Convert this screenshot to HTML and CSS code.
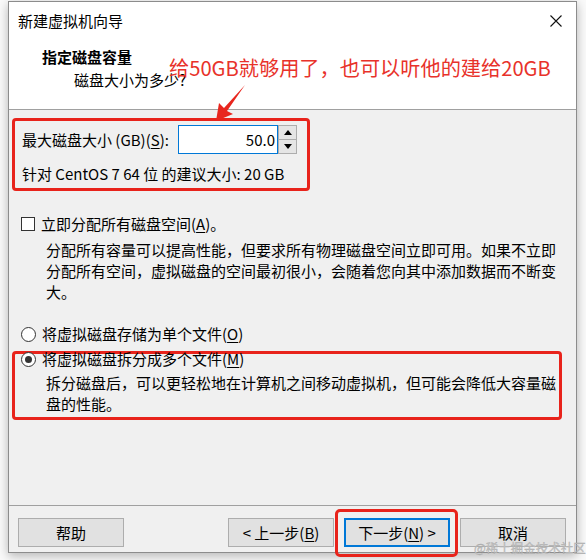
FILE: index.html
```html
<!DOCTYPE html>
<html lang="zh-CN">
<head>
    <meta charset="UTF-8">
    <meta name="viewport" content="width=device-width, initial-scale=1.0">
    <title>新建虚拟机向导</title>
    <link rel="stylesheet" href="styles.css">
</head>
<body>

    <div class="window">
        <!-- 标题栏 -->
        <div class="titlebar">
            <span class="title">新建虚拟机向导</span>
            <svg class="close" width="12" height="12" viewBox="0 0 12 12">
                <path d="M0.5 0.5 L11.5 11.5 M11.5 0.5 L0.5 11.5" stroke="#111" stroke-width="1.1" fill="none"/>
            </svg>
        </div>

        <!-- 页头 -->
        <div class="header">
            <h1>指定磁盘容量</h1>
            <p class="sub">磁盘大小为多少?</p>
            <p class="note">给50GB就够用了，也可以听他的建给20GB</p>
            <svg class="arrow" width="34" height="40" viewBox="0 0 34 40">
                <path d="M2 38 L5 20 L10 25 L31 2 L13 28 L19 31 Z" fill="#e8261e"/>
            </svg>
        </div>

        <div class="content">
            <!-- 磁盘大小 -->
            <div class="mark size-box">
                <div class="size-row">
                    <label class="size-label">最大磁盘大小 (GB)(<u>S</u>):</label>
                    <div class="spin">
                        <div class="spin-input">50.0</div>
                        <div class="spin-btns">
                            <span class="spin-btn"><i class="tri up"></i></span>
                            <span class="spin-btn"><i class="tri down"></i></span>
                        </div>
                    </div>
                </div>
                <p class="hint">针对 CentOS 7 64 位 的建议大小: 20 GB</p>
            </div>

            <!-- 立即分配 -->
            <div class="option check-row">
                <span class="checkbox"></span>
                <span>立即分配所有磁盘空间(<u>A</u>)。</span>
            </div>
            <p class="desc">分配所有容量可以提高性能，但要求所有物理磁盘空间立即可用。如果不立即分配所有空间，虚拟磁盘的空间最初很小，会随着您向其中添加数据而不断变大。</p>

            <!-- 单个文件 -->
            <div class="option radio-row">
                <span class="radio"></span>
                <span>将虚拟磁盘存储为单个文件(<u>O</u>)</span>
            </div>

            <!-- 多个文件 -->
            <div class="mark split-box">
                <div class="option split-row">
                    <span class="radio on"></span>
                    <span>将虚拟磁盘拆分成多个文件(<u>M</u>)</span>
                </div>
                <p class="desc split-desc">拆分磁盘后，可以更轻松地在计算机之间移动虚拟机，但可能会降低大容量磁盘的性能。</p>
            </div>
        </div>

        <!-- 底部按钮 -->
        <div class="footer">
            <button class="btn">帮助</button>
            <div class="nav">
                <button class="btn">&lt; 上一步(<u>B</u>)</button>
                <div class="next-wrap">
                    <button class="btn default">下一步(<u>N</u>) &gt;</button>
                    <span class="next-mark"></span>
                </div>
                <button class="btn">取消</button>
            </div>
        </div>
    </div>

    <span class="watermark">@稀土掘金技术社区</span>

</body>
</html>
```

FILE: styles.css
```css
/* 向导窗口 */
body {
    margin: 0;
    padding-top: 1px;
    background: #fafafa;
    font-family: "Noto Sans CJK SC", "Noto Sans", sans-serif;
    font-size: 15px;
    color: #000;
    position: relative;
    height: 559px;
    overflow: hidden;
}
p, h1 {
    margin: 0;
}
u {
    text-underline-offset: 2px;
}
.window {
    box-sizing: border-box;
    margin-left: 8px;
    width: 569px;
    height: 552px;
    border: 1px solid #8c8c8c;
    box-shadow: 0 3px 10px rgba(0, 0, 0, 0.28);
    background: #f0f0f0;
    display: flex;
    flex-direction: column;
}
.titlebar {
    height: 38px;
    background: #fff;
    display: flex;
    align-items: center;
    justify-content: space-between;
    padding: 0 14px 0 9px;
    line-height: 20px;
}
.header {
    position: relative;
    height: 70px;
    box-sizing: border-box;
    background: #fff;
    border-bottom: 1px solid #a0a0a0;
    padding: 7px 0 0 33px;
    line-height: 20px;
}
.header h1 {
    font-size: 15px;
    font-weight: bold;
}
.sub {
    margin: 3px 0 0 32px;
}
.note {
    position: absolute;
    left: 160px;
    top: 15px;
    font-size: 20.2px;
    line-height: 26px;
    color: #e8322a;
}
.arrow {
    position: absolute;
    left: 205px;
    top: 43px;
}

.content {
    flex: 1;
    padding: 8px 14px 0 3px;
    line-height: 20px;
}
.mark {
    border: 3px solid #e8231b;
    border-radius: 4px;
}
.size-box {
    box-sizing: border-box;
    width: 298px;
    padding: 4px 10px 4px 7px;
}
.size-row {
    display: flex;
    align-items: center;
    height: 29px;
}
.size-label {
    width: 156px;
}
.spin {
    display: flex;
    height: 29px;
}
.spin-input {
    box-sizing: border-box;
    width: 100px;
    border: 1px solid #0078d7;
    background: #fff;
    text-align: right;
    padding-right: 2px;
    line-height: 27px;
}
.spin-btns {
    display: flex;
    flex-direction: column;
    width: 19px;
}
.spin-btn {
    flex: 1;
    box-sizing: border-box;
    border: 1px solid #adadad;
    background: #e5e5e5;
    display: flex;
    align-items: center;
    justify-content: center;
}
.spin-btn + .spin-btn {
    border-top: none;
}
.tri {
    width: 0;
    height: 0;
    border-left: 4px solid transparent;
    border-right: 4px solid transparent;
}
.tri.up {
    border-bottom: 5px solid #000;
}
.tri.down {
    border-top: 5px solid #000;
}
.hint {
    margin-top: 10px;
}

.option {
    display: flex;
    align-items: center;
    gap: 6px;
    padding-left: 9px;
}
.check-row {
    margin-top: 23px;
}
.checkbox {
    width: 14px;
    height: 14px;
    box-sizing: border-box;
    border: 1px solid #333;
    background: #fff;
}
.radio {
    width: 15px;
    height: 15px;
    box-sizing: border-box;
    border: 1px solid #333;
    border-radius: 50%;
    background: #fff;
    display: flex;
    align-items: center;
    justify-content: center;
}
.radio.on::after {
    content: "";
    width: 7px;
    height: 7px;
    border-radius: 50%;
    background: #333;
}
.desc {
    width: 520px;
    margin: 5px 0 0 34px;
    line-height: 21px;
}
.radio-row {
    margin-top: 22px;
}
.split-box {
    box-sizing: border-box;
    width: 550px;
    margin-top: 7px;
    padding-bottom: 3px;
}
.split-row {
    margin-top: -5px;
    padding-left: 6px;
}
.split-desc {
    margin: 3px 0 0 31px;
}

.footer {
    border-top: 1px solid #a0a0a0;
    padding: 12px 10px 0 9px;
    height: 34px;
    display: flex;
    justify-content: space-between;
}
.nav {
    display: flex;
    gap: 10px;
}
.btn {
    box-sizing: border-box;
    width: 106px;
    height: 29px;
    padding: 0;
    background: #e1e1e1;
    border: 1px solid #adadad;
    font-family: inherit;
    font-size: 15px;
    color: #000;
}
.btn.default {
    border: 2px solid #0078d7;
}
.next-wrap {
    position: relative;
}
.next-mark {
    position: absolute;
    left: -9px;
    right: -8px;
    top: -9px;
    bottom: -5px;
    border: 3px solid #e8231b;
    border-radius: 5px;
}
.watermark {
    position: absolute;
    left: 474px;
    top: 540px;
    font-size: 12.5px;
    line-height: 16px;
    color: #c4c4c4;
    -webkit-text-stroke: 0.3px #aaa;
}
```
